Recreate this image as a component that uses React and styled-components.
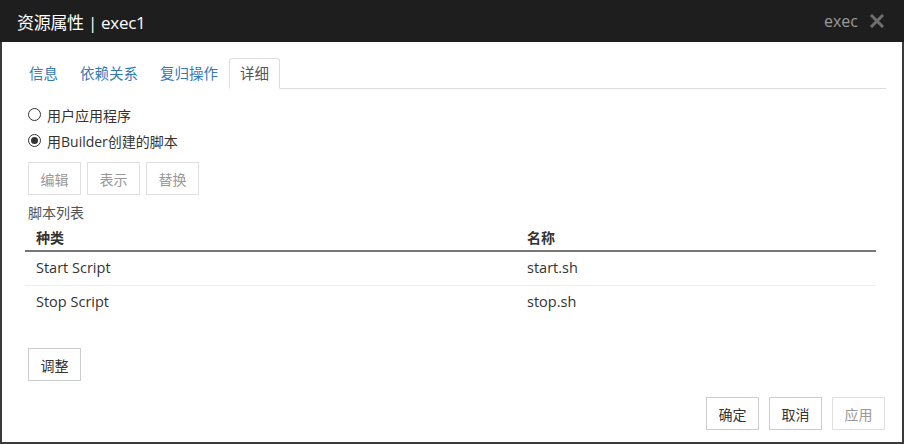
import React, { useState } from 'react';
import styled, { createGlobalStyle } from 'styled-components';

const GlobalStyle = createGlobalStyle`
  html, body {
    margin: 0;
    padding: 0;
    background: #fff;
  }
  body {
    font-family: "Open Sans", "Noto Sans CJK SC", sans-serif;
    font-size: 14px;
    color: #333;
  }
`;

const Dialog = styled.div`
  width: 904px;
  height: 444px;
  box-sizing: border-box;
  border: 2px solid #3a3a3a;
  border-top: none;
  display: flex;
  flex-direction: column;
  background: #fff;
`;

const TitleBar = styled.div`
  height: 42px;
  background: #1e1e1e;
  display: flex;
  align-items: center;
  padding: 0 20px 0 17px;
  margin: 0 -2px;
  flex-shrink: 0;
`;

const Title = styled.div`
  color: #fff;
  font-size: 17px;
  flex: 1;
  letter-spacing: -0.3px;
`;

const TypeLabel = styled.span`
  color: #9a9a9a;
  font-size: 16px;
  margin-right: 12px;
`;

const CloseIcon = styled.svg`
  width: 14px;
  height: 14px;
  display: block;
`;

const Body = styled.div`
  flex: 1;
  padding: 16px 16px 0 16px;
  display: flex;
  flex-direction: column;
`;

const Tabs = styled.ul`
  list-style: none;
  margin: 0;
  padding: 0;
  display: flex;
  border-bottom: 1px solid #ddd;
  height: 30px;
`;

const Tab = styled.li`
  padding: 0 10px 3px 10px;
  height: 31px;
  margin-bottom: -1px;
  box-sizing: border-box;
  display: flex;
  align-items: center;
  font-size: 14.5px;
  color: ${(p) => (p.active ? '#555' : '#337ab7')};
  border: 1px solid ${(p) => (p.active ? '#ddd' : 'transparent')};
  border-bottom-color: transparent;
  background: #fff;
  border-radius: 3px 3px 0 0;
`;

const Panel = styled.div`
  padding: 13px 0 0 10px;
  display: flex;
  flex-direction: column;
`;

const RadioRow = styled.label`
  display: flex;
  align-items: center;
  height: 27px;
  gap: 6px;
  margin-top: -1px;
`;

const RadioCircle = styled.span`
  width: 11px;
  height: 11px;
  border-radius: 50%;
  border: 1px solid #333;
  display: flex;
  align-items: center;
  justify-content: center;
  box-sizing: content-box;

  &::after {
    content: '';
    width: 7px;
    height: 7px;
    border-radius: 50%;
    background: ${(p) => (p.checked ? '#333' : 'transparent')};
  }
`;

const ButtonRow = styled.div`
  display: flex;
  gap: 6px;
  margin-top: ${(p) => p.top || 0}px;
`;

const Button = styled.button`
  font-family: inherit;
  font-size: 14px;
  height: 33px;
  min-width: 53px;
  padding: 0 11px;
  background: #fff;
  border: 1px solid ${(p) => (p.disabled ? '#e0e0e0' : '#ccc')};
  color: ${(p) => (p.disabled ? '#999' : '#333')};
  border-radius: 0;
  cursor: ${(p) => (p.disabled ? 'default' : 'pointer')};
`;

const SectionLabel = styled.div`
  margin-top: 8px;
  color: #555;
  font-size: 14px;
  height: 20px;
  line-height: 20px;
`;

const Table = styled.table`
  border-collapse: collapse;
  width: 851px;
  margin-left: -3px;
  font-size: 14px;
`;

const Th = styled.th`
  text-align: left;
  font-weight: bold;
  padding: 3px 11px 2px 11px;
  border-bottom: 2px solid #777;
  height: 22px;
  width: ${(p) => p.w || 'auto'};
`;

const Td = styled.td`
  padding: 0 11px 2px 11px;
  height: 31px;
  font-size: 14.5px;
  border-bottom: 1px solid ${(p) => (p.last ? 'transparent' : '#eee')};
`;

const Footer = styled.div`
  display: flex;
  justify-content: flex-end;
  gap: 10px;
  padding: 0 1px 12px 0;
  margin-top: auto;
`;

const rows = [
  { type: 'Start Script', name: 'start.sh' },
  { type: 'Stop Script', name: 'stop.sh' },
];

export default function App() {
  const [mode, setMode] = useState('builder');

  return (
    <>
      <GlobalStyle />
      <Dialog>
        <TitleBar>
          <Title>资源属性 | exec1</Title>
          <TypeLabel>exec</TypeLabel>
          <CloseIcon viewBox="0 0 14 14">
            <path d="M2 2 L12 12 M12 2 L2 12" stroke="#6f6f6f" strokeWidth="3" strokeLinecap="square" />
          </CloseIcon>
        </TitleBar>
        <Body>
          <Tabs>
            <Tab>信息</Tab>
            <Tab>依赖关系</Tab>
            <Tab>复归操作</Tab>
            <Tab active>详细</Tab>
          </Tabs>
          <Panel>
            <RadioRow onClick={() => setMode('app')}>
              <RadioCircle checked={mode === 'app'} />
              用户应用程序
            </RadioRow>
            <RadioRow onClick={() => setMode('builder')}>
              <RadioCircle checked={mode === 'builder'} />
              用Builder创建的脚本
            </RadioRow>
            <ButtonRow top={8}>
              <Button disabled>编辑</Button>
              <Button disabled>表示</Button>
              <Button disabled>替换</Button>
            </ButtonRow>
            <SectionLabel>脚本列表</SectionLabel>
            <Table>
              <thead>
                <tr>
                  <Th w="469px">种类</Th>
                  <Th>名称</Th>
                </tr>
              </thead>
              <tbody>
                {rows.map((r, i) => (
                  <tr key={r.type}>
                    <Td last={i === rows.length - 1}>{r.type}</Td>
                    <Td last={i === rows.length - 1}>{r.name}</Td>
                  </tr>
                ))}
              </tbody>
            </Table>
            <ButtonRow top={28}>
              <Button>调整</Button>
            </ButtonRow>
          </Panel>
          <Footer>
            <Button>确定</Button>
            <Button>取消</Button>
            <Button disabled>应用</Button>
          </Footer>
        </Body>
      </Dialog>
    </>
  );
}
